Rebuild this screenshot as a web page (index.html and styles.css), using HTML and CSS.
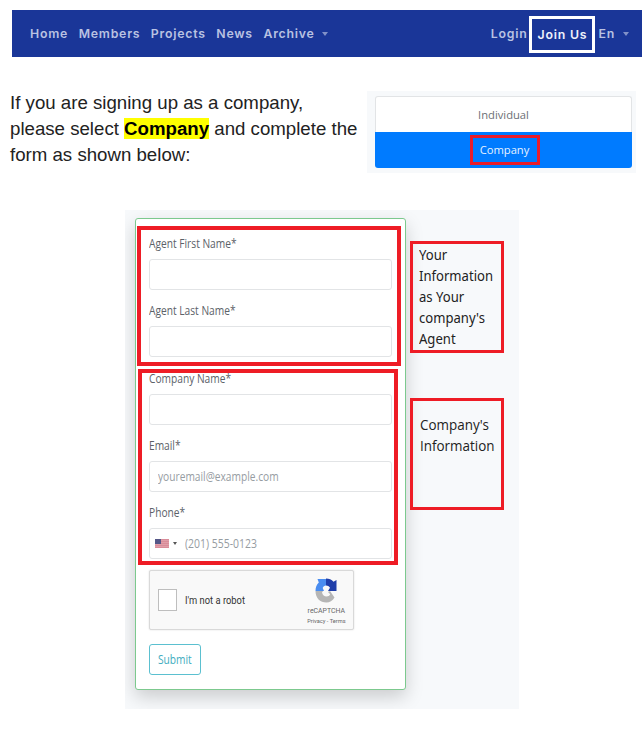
FILE: index.html
```html
<!DOCTYPE html>
<html lang="en">
<head>
<meta charset="utf-8">
<title>Join Us</title>
<link rel="stylesheet" href="styles.css">
</head>
<body>
<nav class="navbar">
  <div class="nav-links">
    <a>Home</a><a>Members</a><a>Projects</a><a>News</a><a>Archive</a><i class="caret"></i>
  </div>
  <div class="nav-user">
    <a>Login</a><a class="join">Join Us</a><a>En</a><i class="caret"></i>
  </div>
</nav>
<section class="intro">
  <p>If you are signing up as a company,<br>please select <mark>Company</mark> and complete the<br>form as shown below:</p>
  <div class="switch">
    <div class="option">Individual</div>
    <div class="option active"><span class="marked">Company</span></div>
  </div>
</section>
<main class="panel">
  <form class="card">
    <div class="field"><label><span>Agent First Name*</span></label><div class="input"></div></div>
    <div class="field"><label><span>Agent Last Name*</span></label><div class="input"></div></div>
    <div class="field"><label><span>Company Name*</span></label><div class="input"></div></div>
    <div class="field"><label><span>Email*</span></label><div class="input"><span>youremail@example.com</span></div></div>
    <div class="field"><label><span>Phone*</span></label><div class="input phone">
      <svg class="flag" viewBox="0 0 14 9"><path fill="#d98c99" d="M0 0h14v9H0z"/><path stroke="#e4abb4" stroke-width=".6" d="M0 1.5h14M0 3.5h14M0 5.5h14M0 7.5h14"/><path fill="#555787" d="M0 0h6v5H0z"/></svg>
      <i class="dial-caret"></i><span>(201) 555-0123</span></div></div>
    <div class="captcha">
      <i class="checkbox"></i>
      <span class="robot">I'm not a robot</span>
      <div class="brand">
        <svg class="logo" viewBox="0 0 22 25">
          <path fill="#b5b5b5" d="M.5 13H8l-1 1.500c.6 2.500 2.300 4 4.500 4 1.800 0 3-.8 3.700-2.200L13 14l2-1 4.500 6.500c-2 3.400-4.800 5-8 5C5 24.500.5 20 .5 13z"/>
          <path fill="#4a8df0" d="M.5 13C.5 9.500 1.500 6.500 3.800 4.500L2.500 1H11v6.500c-1.600.2-2.800 1.200-3.300 2.500L9 13z"/>
          <path fill="#1f3eaa" d="M11 .5c3 0 5.500 1 7.500 3.200L21.500 2v11H13l2-3.200C14 8.200 12.700 7.500 11 7.500z"/>
        </svg>
        <span class="brand-name">reCAPTCHA</span>
        <span class="brand-terms">Privacy - Terms</span>
      </div>
    </div>
    <div class="submit"><span>Submit</span></div>
    <i class="outline outline-agent"></i>
    <i class="outline outline-company"></i>
  </form>
  <aside class="notes">
    <div class="note"><p>Your<br>Information<br>as Your<br>company's<br>Agent</p></div>
    <div class="note note-company"><p>Company's<br>Information</p></div>
  </aside>
</main>
</body>
</html>
```
FILE: styles.css
```css
* { box-sizing: border-box; }
body { margin: 0; padding: 10px 0 0; width: 643px; height: 745px; background: #fff; font-family: "Open Sans", sans-serif; overflow: hidden; }

.navbar { display: flex; justify-content: space-between; align-items: center; height: 47px; width: 630px; margin-left: 12px; padding: 0 13px 0 18px; background: #1a3698; color: #b9c2e2; font: 600 12.3px/18px Inter, sans-serif; letter-spacing: .78px; }
.nav-links, .nav-user { display: flex; align-items: center; padding-top: 1px; }
.nav-links { gap: 10.5px; }
.caret { border: 3px solid transparent; border-top: 4px solid #8291c8; border-bottom: 0; margin-left: -3px; }
.nav-user .caret { margin-left: 8px; }
.join { height: 37px; width: 66px; margin: 0 3px 0 2px; border: 3px solid #fff; color: #eef1fb; line-height: 31px; text-align: center; }

.intro { display: flex; justify-content: space-between; height: 82px; margin: 34px 7px 0 10px; }
.intro p { margin: -1px 0 0; color: #222; font: 18.67px/26px "Liberation Sans", sans-serif; white-space: nowrap; }
.intro mark { background: #ff0; color: #000; font-weight: bold; }
.switch { width: 269px; height: 82px; padding: 5px 4px 5px 8px; background: #f7f9fb; font-size: 11.2px; }
.option { display: flex; align-items: center; justify-content: center; height: 36px; border: 1px solid #e2e4e6; border-bottom: 0; border-radius: 3px 3px 0 0; background: #fff; color: #6c7075; }
.option.active { border: 0; border-radius: 0 0 3px 3px; background: #007bff; color: #e6f2ff; }
.marked { width: 70px; height: 30px; margin-left: 2px; border: 3px solid #e81c2b; text-align: center; line-height: 24px; }

.panel { display: flex; width: 394px; height: 499px; margin: 37px 0 0 125px; padding: 8px 0 0 10px; background: #f7f9fb; overflow: hidden; }
.card { position: relative; width: 271px; height: 472px; padding: 15px 13px 0; border: 1px solid #7cc98e; border-radius: 3px; background: #fff; box-shadow: 0 7px 18px rgba(0,0,0,.18); }
.field { height: 67.25px; }
.field label { display: block; height: 25px; color: #5b6168; font-size: 12px; line-height: 20px; }
.field span, .submit span, .robot { display: inline-block; white-space: nowrap; transform: scaleX(.85); transform-origin: left; }
.input { display: flex; align-items: center; height: 31px; width: 243px; padding-left: 8px; border: 1px solid #e2e4e6; border-radius: 3px; color: #969ca2; font-size: 12px; }
.phone { padding-left: 5px; }
.phone span { transform: scaleX(.87); }
.flag { width: 14px; height: 9px; }
.dial-caret { margin: 0 8px 0 4px; border: 2px solid transparent; border-top: 3px solid #555; border-bottom: 0; }
.captcha { display: flex; align-items: center; width: 205px; height: 60px; padding-left: 8px; border: 1px solid #d9d9d9; border-radius: 2px; background: #f9f9f9; box-shadow: 0 0 2px #ddd; font-family: Roboto, sans-serif; }
.checkbox { flex: none; width: 19px; height: 22px; border: 1px solid #bebebe; background: #fff; }
.robot { flex: none; margin-left: 8px; width: 96px; color: #333; font-size: 11px; }
.brand { display: flex; flex-direction: column; align-items: center; flex: none; width: 90px; padding-top: 4px; color: #666; font-size: 7px; line-height: 10px; }
.logo { width: 22px; height: 25px; }
.brand-name { margin-top: 3px; font-size: 7.5px; transform: scaleX(.92); }
.brand-terms { font-size: 6px; transform: scaleX(.94); }
.submit { width: 52px; height: 31px; margin-top: 13.5px; padding-left: 8px; border: 1px solid #5bc0d0; border-radius: 3px; color: #42adc0; font-size: 12px; line-height: 29px; }

.outline { position: absolute; border: 4px solid #ee1c25; }
.outline-agent { left: 1px; top: 7px; width: 264px; height: 140px; }
.outline-company { left: 2px; top: 150px; width: 260px; height: 196px; }

.notes { position: relative; width: 94px; margin: 23px 0 0 4px; }
.note { height: 112px; padding: 0 0 0 6px; border: 3px solid #ee1c25; color: #222; }
.note p { margin: 0; font: 14px/21px "Noto Sans", sans-serif; transform: scaleX(.935); transform-origin: left; }
.note-company { margin-top: 45px; padding: 13px 0 0 7px; }
.note-company p { font-family: "Open Sans", sans-serif; transform: scaleX(.96); }
```
